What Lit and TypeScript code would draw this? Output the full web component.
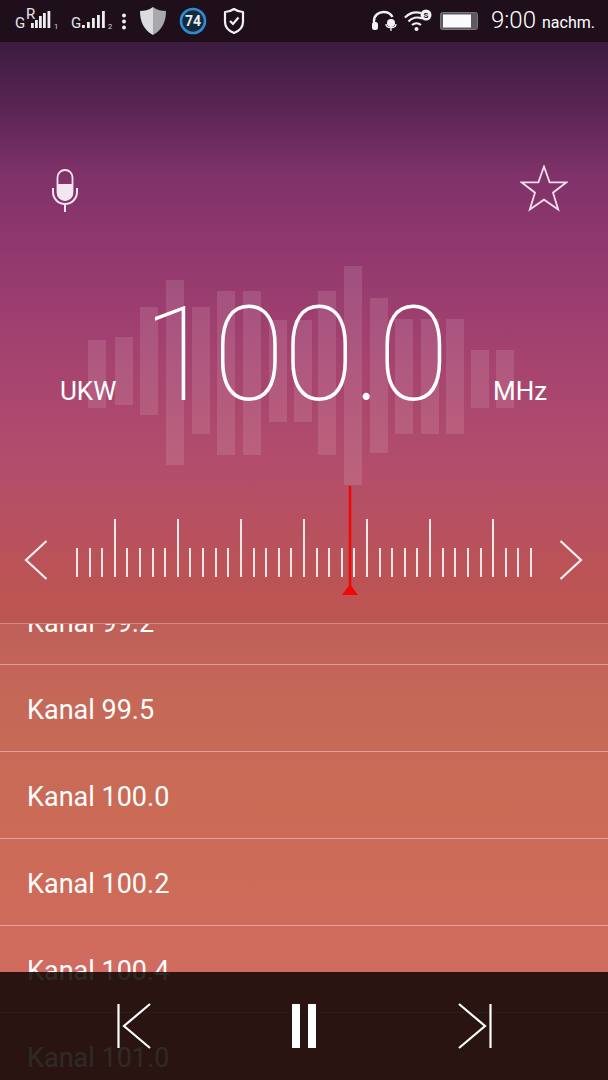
import { LitElement, html, css, svg } from "lit";
import { customElement } from "lit/decorators.js";

const BARS: [number, number, number][] = [
  [88, 340, 408], [115, 337, 405], [140, 307, 415], [166, 280, 465], [192, 307, 434], [217, 291, 455], [243, 291, 455], [269, 320, 422], [294, 320, 422],
  [318, 291, 455], [344, 266, 485], [370, 298, 453], [395, 319, 434], [421, 319, 434], [446, 319, 434], [471, 350, 408], [496, 350, 408],
];
const TICKS = Array.from({ length: 37 }, (_, i) => i % 5 === 3);
const ROWS = ["99.2", "99.5", "100.0", "100.2", "100.4", "101.0"];

@customElement("app-root")
export class AppRoot extends LitElement {
  static styles = css`
    :host {
      display: block;
      width: 608px;
      height: 1080px;
      overflow: hidden;
      position: relative;
      font-family: Roboto, "Liberation Sans", sans-serif;
      color: #fff;
      background: linear-gradient(180deg, #351a38 0px, #3c1c40 42px, #5a2554 110px, #7f3269 175px, #93396f 260px, #a7446f 370px, #b34e6b 470px, #bb5356 570px, #bc5650 623px, #c2604f 700px, #c7634d 800px, #cc6350 900px, #cf6358 972px);
    }
    .status { height: 42px; background: #1e0f1a; display: flex; align-items: center; position: relative; }
    .status svg { display: block; flex: none; }
    .sig { width: 60px; height: 42px; position: relative; flex: none; }
    .g { position: absolute; font-size: 15px; line-height: 14px; color: #e8e4e8; }
    .clock { font-size: 24px; font-weight: 300; margin-left: 12px; line-height: 42px; white-space: nowrap; }
    .ampm { font-size: 16px; font-weight: 400; margin-left: 6px; }
    .hero { height: 581px; position: relative; }
    .wave { position: absolute; left: 0; top: 224px; display: flex; align-items: flex-start; }
    .bar { width: 17.5px; background: rgba(255, 255, 255, 0.115); flex: none; }
    .tools { position: relative; padding: 123px 40px 0 52px; display: flex; justify-content: space-between; align-items: flex-start; height: 47px; }
    .tools svg { display: block; }
    .freq { position: relative; display: flex; align-items: baseline; padding: 48px 0 0 60px; height: 190px; line-height: 190px; }
    .band { font-size: 26px; width: 83px; flex: none; }
    .num { font-size: 131px; font-weight: 100; width: 350px; flex: none; letter-spacing: -1.6px; }
    .dot { letter-spacing: -4px; }
    .dial { position: relative; display: flex; align-items: flex-end; margin-top: 67px; padding-left: 24px; height: 62px; }
    .dial .chev { flex: none; display: block; margin-bottom: -2px; }
    .ruler { display: flex; align-items: flex-end; gap: 10.62px; margin: 0 27px 2px 28px; flex: none; height: 58px; align-self: flex-end; }
    .tick { width: 2px; height: 29px; background: rgba(255, 255, 255, 0.86); flex: none; }
    .tick.tall { height: 58px; }
    .needle { position: absolute; left: 342px; top: -31px; display: block; }
    .list { position: relative; height: 457px; overflow: hidden; background: rgba(255, 255, 255, 0.055); border-top: 1px solid rgba(255, 255, 255, 0.28); box-sizing: border-box; }
    .rows { margin-top: -46px; }
    .row { height: 87px; box-sizing: border-box; border-bottom: 1px solid rgba(255, 255, 255, 0.38); padding-left: 27px; font-size: 27px; line-height: 90px; }
    .controls { position: absolute; left: 0; right: 0; bottom: 0; height: 108px; background: rgba(13, 6, 3, 0.86); display: flex; justify-content: center; align-items: center; gap: 137.5px; box-sizing: border-box; }
    .controls svg { display: block; flex: none; }
    .pause { margin: 0 -1px; }
    .ml7 { margin-left: 7px; }
  `;

  private signal(second: boolean) {
    const bars = second
      ? [[22, 3], [27, 6], [32, 10], [37, 13], [42, 17]]
      : [[31, 5], [35, 8], [39, 12], [43, 15], [47.5, 17]];
    return html`<div class="sig">
      <span class="g" style="left:${second ? 11 : 15}px;top:16px">G</span>
      ${second ? "" : html`<span class="g" style="left:26px;top:7px">R</span>`}
      <svg width="60" height="42" viewBox="0 0 60 42">
        ${bars.map(([x, h]) => svg`<rect x=${x} y=${28 - h} width="2.8" height=${h} fill="#eee"></rect>`)}
        <text x=${second ? 48 : 54} y="29" font-size="7.5" fill="#ddd" font-family="Roboto">${second ? "2" : "1"}</text>
      </svg>
    </div>`;
  }

  render() {
    return html`
      <div class="status">
        ${this.signal(false)}
        ${this.signal(true)}
        <svg width="8" height="42" viewBox="0 0 8 42"><circle cx="4" cy="15.5" r="2" fill="#eee"></circle><circle cx="4" cy="21.5" r="2" fill="#eee"></circle><circle cx="4" cy="27.5" r="2" fill="#eee"></circle></svg>
        <svg style="margin-left:11px" width="28" height="42" viewBox="0 0 28 42">
          <path d="M14 7 C18 10 23 11 27 11 C27 22 23 30 14 35 Z" fill="#a9a9ab"></path>
          <path d="M14 7 C10 10 5 11 1 11 C1 22 5 30 14 35 Z" fill="#dcdcde"></path>
        </svg>
        <svg style="margin-left:11px" width="30" height="42" viewBox="0 0 30 42">
          <circle cx="15" cy="21" r="12" fill="#142a3c" stroke="#2c8ed0" stroke-width="2.6"></circle>
          <text x="15" y="26" text-anchor="middle" font-size="14" font-weight="700" fill="#e8eef4" font-family="Roboto">74</text>
        </svg>
        <svg style="margin-left:15px" width="22" height="42" viewBox="0 0 22 42">
          <path d="M11 9 C14 11 17 12 20 12 V22 C20 27 16 31 11 33 C6 31 2 27 2 22 V12 C5 12 8 11 11 9 Z" fill="none" stroke="#f2f2f2" stroke-width="2.2" stroke-linejoin="round"></path>
          <path d="M7 21 L10 24 L15.5 17.5" fill="none" stroke="#f2f2f2" stroke-width="2.2"></path>
        </svg>
        <svg style="margin-left:126px" width="26" height="42" viewBox="0 0 26 42">
          <path d="M3 26 V21 C3 15 8 12 12.5 12 C17 12 20 14 21.5 17" fill="none" stroke="#f2f2f2" stroke-width="2.4"></path>
          <rect x="1" y="22" width="6" height="8" rx="2.5" fill="#f2f2f2"></rect>
          <rect x="16" y="19" width="8" height="8" rx="4" fill="#f2f2f2"></rect>
          <path d="M15 24 C15 29 25 29 25 24 M20 28 V31" fill="none" stroke="#f2f2f2" stroke-width="1.3"></path>
        </svg>
        <svg class="ml7" width="28" height="42" viewBox="0 0 28 42">
          <path d="M1 17.5 A17 17 0 0 1 17 13 M4.5 21.5 A12 12 0 0 1 18 18.5 M8 25 A7 7 0 0 1 17 25" fill="none" stroke="#f2f2f2" stroke-width="2.2"></path>
          <circle cx="12.5" cy="29" r="2" fill="#f2f2f2"></circle>
          <circle cx="22" cy="15" r="5.5" fill="#f2f2f2"></circle>
          <text x="22" y="18" text-anchor="middle" font-size="8" font-weight="700" fill="#1e0f1a" font-family="Roboto">S</text>
        </svg>
        <svg style="margin-left:8px" width="39" height="42" viewBox="0 0 39 42">
          <rect x="0.5" y="12.5" width="37" height="17" rx="2" fill="#5c5a60" stroke="#77757a"></rect>
          <rect x="3" y="14.5" width="28" height="13" fill="#fafafa"></rect>
        </svg>
        <span class="clock">9:00<span class="ampm">nachm.</span></span>
      </div>
      <div class="hero">
        <div class="wave">
          ${BARS.map(([x, a, b], i) => html`<div class="bar" style="margin-left:${x - (i ? BARS[i - 1][0] + 17.5 : 0)}px;margin-top:${a - 266}px;height:${b - a}px"></div>`)}
        </div>
        <div class="tools">
          <svg width="26" height="47" viewBox="0 0 26 47">
            <rect x="5.5" y="5" width="15" height="30" rx="7.5" fill="none" stroke="#f3e6f0" stroke-width="1.8"></rect>
            <path d="M5 19 H21 V27.5 A8 8 0 0 1 5 27.5 Z" fill="#f3e6f0"></path>
            <path d="M1 23 V27 A12 12 0 0 0 25 27 V23 M13 39 V47" fill="none" stroke="#f3e6f0" stroke-width="2"></path>
          </svg>
          <svg width="48" height="47" viewBox="0 0 48 47">
            <path d="M24 1.5 L29.6 17.3 L46.5 17.3 L33 27.7 L38.2 44.5 L24 34.7 L9.8 44.5 L15 27.7 L1.5 17.3 L18.4 17.3 Z" fill="none" stroke="#f3dcec" stroke-width="1.8" stroke-linejoin="miter"></path>
          </svg>
        </div>
        <div class="freq">
          <span class="band">UKW</span>
          <span class="num">100<span class="dot">.</span>0</span>
          <span class="band">MHz</span>
        </div>
        <div class="dial">
          <svg class="chev" width="24" height="42" viewBox="0 0 24 42"><path d="M22.5 2 L2 21 L22.5 40" fill="none" stroke="#fbeef0" stroke-width="2.2"></path></svg>
          <div class="ruler">
            ${TICKS.map((t) => html`<div class="tick ${t ? "tall" : ""}"></div>`)}
          </div>
          <svg class="chev" width="24" height="42" viewBox="0 0 24 42"><path d="M1.5 2 L22 21 L1.5 40" fill="none" stroke="#fbeef0" stroke-width="2.2"></path></svg>
          <svg class="needle" width="16" height="110" viewBox="0 0 16 110">
            <rect x="6.7" y="0" width="2.6" height="100" fill="#f00808"></rect>
            <path d="M8 98 L16 109 H0 Z" fill="#f00808"></path>
          </svg>
        </div>
      </div>
      <div class="list">
        <div class="rows">
          ${ROWS.map((r) => html`<div class="row">Kanal ${r}</div>`)}
        </div>
      </div>
      <div class="controls">
        <svg width="34" height="46" viewBox="0 0 34 46"><path d="M1.5 1 V45 M33 1 L7 23 L33 45" fill="none" stroke="#fff" stroke-width="2.2"></path></svg>
        <svg class="pause" width="34" height="46" viewBox="0 0 34 46"><rect x="5" y="1" width="8" height="44" fill="#fff"></rect><rect x="21" y="1" width="8" height="44" fill="#fff"></rect></svg>
        <svg width="34" height="46" viewBox="0 0 34 46"><path d="M32.5 1 V45 M1 1 L27 23 L1 45" fill="none" stroke="#fff" stroke-width="2.2"></path></svg>
      </div>
    `;
  }
}
